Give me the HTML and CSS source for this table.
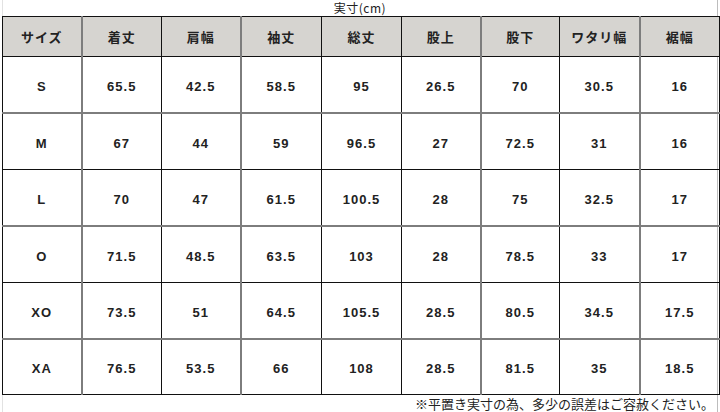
FILE: index.html
```html
<!DOCTYPE html>
<html lang="ja">
<head>
<meta charset="utf-8">
<link rel="stylesheet" href="styles.css">
</head>
<body>
<div class="page">
  <div class="title">実寸(cm)</div>
  <table class="size">
    <colgroup>
      <col class="c1"><col class="c2"><col class="c3"><col class="c4"><col class="c5"><col class="c6"><col class="c7"><col class="c8"><col class="c9">
    </colgroup>
    <thead>
      <tr class="head">
        <th>サイズ</th><th class="g">着丈</th><th>肩幅</th><th class="g">袖丈</th><th>総丈</th><th>股上</th><th class="g">股下</th><th>ワタリ幅</th><th class="g">裾幅</th>
      </tr>
    </thead>
    <tbody>
      <tr class="r56 gb"><td>S</td><td class="g">65.5</td><td>42.5</td><td class="g">58.5</td><td>95</td><td>26.5</td><td class="g">70</td><td>30.5</td><td class="g">16</td></tr>
      <tr class="r57"><td>M</td><td class="g">67</td><td>44</td><td class="g">59</td><td>96.5</td><td>27</td><td class="g">72.5</td><td>31</td><td class="g">16</td></tr>
      <tr class="r56 gb"><td>L</td><td class="g">70</td><td>47</td><td class="g">61.5</td><td>100.5</td><td>28</td><td class="g">75</td><td>32.5</td><td class="g">17</td></tr>
      <tr class="r57"><td>O</td><td class="g">71.5</td><td>48.5</td><td class="g">63.5</td><td>103</td><td>28</td><td class="g">78.5</td><td>33</td><td class="g">17</td></tr>
      <tr class="r56 gb"><td>XO</td><td class="g">73.5</td><td>51</td><td class="g">64.5</td><td>105.5</td><td>28.5</td><td class="g">80.5</td><td>34.5</td><td class="g">17.5</td></tr>
      <tr class="r56"><td>XA</td><td class="g">76.5</td><td>53.5</td><td class="g">66</td><td>108</td><td>28.5</td><td class="g">81.5</td><td>35</td><td class="g">18.5</td></tr>
    </tbody>
  </table>
  <div class="note">※平置き実寸の為、多少の誤差はご容赦ください。</div>
</div>
</body>
</html>
```

FILE: styles.css
```css
html, body {
  margin: 0;
  padding: 0;
  background: #fff;
}
body {
  font-family: "Noto Sans CJK JP", "Liberation Sans", sans-serif;
  color: #111;
}
.page {
  width: 716px;
  margin-left: 2px;
  border-left: 1px solid #e2e2e2;
  border-right: 1px solid #bdbdbd;
  height: 412px;
  box-sizing: border-box;
  display: flex;
  flex-direction: column;
}
.title {
  height: 17px;
  line-height: 16px;
  font-size: 12px;
  text-align: center;
  color: #222;
  letter-spacing: 0.5px;
}
.size {
  border-collapse: collapse;
  table-layout: fixed;
  width: 717px;
  margin-left: -1px;
}
.c1 { width: 79px; }
.c2 { width: 80px; }
.c3 { width: 79px; }
.c4 { width: 81px; }
.c5 { width: 80px; }
.c6 { width: 79px; }
.c7 { width: 79px; }
.c8 { width: 80px; }
.c9 { width: 80px; }
.size th, .size td {
  border: 1px solid #111;
  text-align: center;
  padding: 0;
}
.size .g {
  border-left: 2px solid #7d7d7d;
}
.head {
  height: 40px;
  background: #d6d4d0;
}
.head th {
  font-size: 13px;
  font-weight: bold;
  color: #222;
  letter-spacing: 1px;
}
.size td {
  font-family: "Liberation Sans", "Noto Sans CJK JP", sans-serif;
  font-size: 13px;
  font-weight: bold;
  color: #222;
  letter-spacing: 1px;
  padding-top: 4px;
}
.r56 { height: 56px; }
.r57 { height: 57px; }
.gb td {
  border-bottom: 2px solid #7d7d7d;
}
.note {
  text-align: right;
  padding-right: 3px;
  font-size: 13px;
  line-height: 16px;
  margin-top: 1px;
  color: #222;
}
```
